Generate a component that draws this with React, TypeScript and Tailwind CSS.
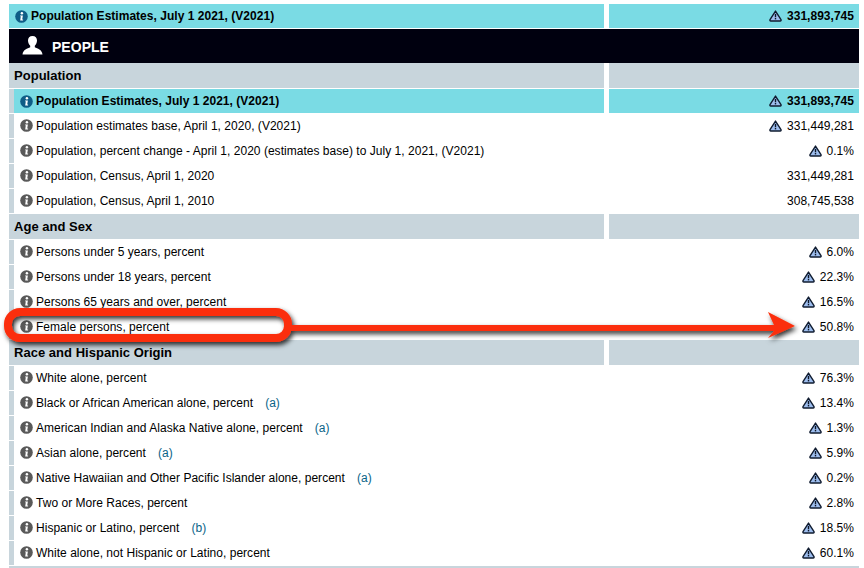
const Info = ({ dark }: { dark?: boolean }) => (
  <svg width="13" height="13" viewBox="0 0 13 13" className="shrink-0">
    <circle cx="6.5" cy="6.5" r="6.3" fill={dark ? "#0f5d86" : "#595959"} />
    <circle cx="6.9" cy="3.2" r="1.25" fill="#fff" />
    <path d="M5.2 5.4h2.7l-.7 4.2h.9v1H5.2l.6-4.3h-.8z" fill="#fff" />
  </svg>
);

const Warn = () => (
  <svg width="13" height="12" viewBox="0 0 13 12" className="shrink-0">
    <path d="M6.5 1.1 L12 9.7 Q12.4 11 11.2 11 H1.8 Q0.6 11 1 9.7 Z" fill="#9dbdee" stroke="#101c30" strokeWidth="1.4" strokeLinejoin="round" />
    <path d="M6.5 3.9v3.3" stroke="#0d1626" strokeWidth="1.4" />
    <rect x="5.8" y="7.9" width="1.4" height="1.5" fill="#0d1626" />
  </svg>
);

type Row = { label: string; value: string; warn?: boolean; note?: string };

const Data = ({ r }: { r: Row }) => (
  <div className="flex h-[25px]">
    <div className="w-[5px] bg-[#c8d5dc] border-t border-white" />
    <div className="w-[590px] flex items-center pl-[6px] gap-[3px]">
      <Info />
      <span>{r.label}</span>
      {r.note && <span className="text-[#0a6488] ml-[9px]">{r.note}</span>}
    </div>
    <div className="w-[5px]" />
    <div className="w-[250px] flex items-center justify-end pr-[5px] gap-[5px]">
      {r.warn && <Warn />}
      <span>{r.value}</span>
    </div>
  </div>
);

const Heading = ({ label }: { label: string }) => (
  <div className="flex h-[26px] font-bold text-[13px]">
    <div className="w-[595px] bg-[#c8d5dc] border-t border-white flex items-center pl-[5px]">{label}</div>
    <div className="w-[5px]" />
    <div className="w-[250px] bg-[#c8d5dc] border-t border-white" />
  </div>
);

const Highlight = ({ inset }: { inset?: boolean }) => (
  <div className="flex h-[24px] font-bold">
    <div className="w-[595px] flex">
      {inset && <div className="w-[5px] bg-[#c8d5dc]" />}
      <div className="flex-1 bg-[#7adbe4] flex items-center gap-[3px] pl-[6px]">
        <Info dark />
        <span>Population Estimates, July 1 2021, (V2021)</span>
      </div>
    </div>
    <div className="w-[5px]" />
    <div className="w-[250px] bg-[#7adbe4] flex items-center justify-end pr-[5px] gap-[5px]">
      <Warn />
      <span>331,893,745</span>
    </div>
  </div>
);

const pop: Row[] = [
  { label: "Population estimates base, April 1, 2020, (V2021)", value: "331,449,281", warn: true },
  { label: "Population, percent change - April 1, 2020 (estimates base) to July 1, 2021, (V2021)", value: "0.1%", warn: true },
  { label: "Population, Census, April 1, 2020", value: "331,449,281" },
  { label: "Population, Census, April 1, 2010", value: "308,745,538" },
];
const age: Row[] = [
  { label: "Persons under 5 years, percent", value: "6.0%", warn: true },
  { label: "Persons under 18 years, percent", value: "22.3%", warn: true },
  { label: "Persons 65 years and over, percent", value: "16.5%", warn: true },
  { label: "Female persons, percent", value: "50.8%", warn: true },
];
const race: Row[] = [
  { label: "White alone, percent", value: "76.3%", warn: true },
  { label: "Black or African American alone, percent", value: "13.4%", warn: true, note: "(a)" },
  { label: "American Indian and Alaska Native alone, percent", value: "1.3%", warn: true, note: "(a)" },
  { label: "Asian alone, percent", value: "5.9%", warn: true, note: "(a)" },
  { label: "Native Hawaiian and Other Pacific Islander alone, percent", value: "0.2%", warn: true, note: "(a)" },
  { label: "Two or More Races, percent", value: "2.8%", warn: true },
  { label: "Hispanic or Latino, percent", value: "18.5%", warn: true, note: "(b)" },
  { label: "White alone, not Hispanic or Latino, percent", value: "60.1%", warn: true },
];

export default function App() {
  return (
    <div className="relative w-[864px] h-[568px] overflow-hidden bg-white text-black text-[12px] tracking-[0.025px] font-['Liberation_Sans',Arial,sans-serif]">
      <div className="w-[850px] ml-[9px] pt-[4px]">
        <Highlight />
        <div className="h-[34px] mt-[1px] bg-[#00000f] flex items-center pl-[13px] gap-[9px] text-white font-bold text-[14px]">
          <svg width="21" height="19" viewBox="0 0 21 20" preserveAspectRatio="none" className="mb-[2px]">
            <path d="M10.5 0C7.6 0 6 2 6 4.8c0 2.4 1 4.3 2.2 5.4v1.6C5.6 13.4 1 14 .5 19.5h20C20 14 15.4 13.4 12.8 11.8v-1.6C14 9.1 15 7.2 15 4.8 15 2 13.4 0 10.5 0z" fill="#fff" />
          </svg>
          <span className="pt-[2px]">PEOPLE</span>
        </div>
        <div className="h-[26px] flex font-bold text-[13px]">
          <div className="w-[595px] bg-[#c8d5dc] border-b border-white flex items-center pl-[5px]">Population</div>
          <div className="w-[5px]" />
          <div className="w-[250px] bg-[#c8d5dc] border-b border-white" />
        </div>
        <Highlight inset />
        {pop.map((r) => <Data key={r.label} r={r} />)}
        <Heading label="Age and Sex" />
        {age.map((r) => <Data key={r.label} r={r} />)}
        <Heading label="Race and Hispanic Origin" />
        {race.map((r) => <Data key={r.label} r={r} />)}
        <div className="h-[3px] bg-[#c8d5dc] border-t border-white" />
      </div>
      <svg width="864" height="568" viewBox="0 0 864 568" className="absolute left-0 top-0 pointer-events-none">
        <defs>
          <filter id="sh" x="-5%" y="-40%" width="110%" height="200%">
            <feDropShadow dx="2" dy="3" stdDeviation="2.5" floodColor="#000" floodOpacity="0.8" />
          </filter>
        </defs>
        <g filter="url(#sh)">
          <rect x="8" y="312" width="280" height="26" rx="12" fill="none" stroke="#fb2f0a" strokeWidth="8" />
          <path d="M290 325H774L768 312L795 326L768 338L774 331H290Z" fill="#fb2f0a" />
        </g>
      </svg>
    </div>
  );
}
